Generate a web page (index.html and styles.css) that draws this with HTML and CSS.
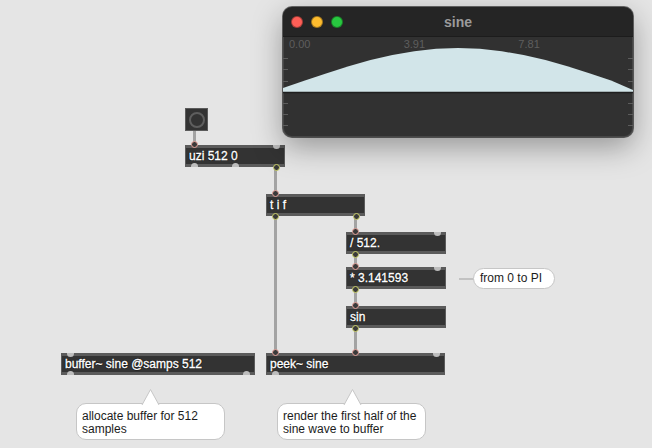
FILE: index.html
```html
<!DOCTYPE html>
<html lang="en">
<head>
  <meta charset="UTF-8">
  <title>sine</title>
  <link rel="stylesheet" href="styles.css">
</head>
<body>
<div class="patcher">
  <svg class="cords" width="652" height="448">
    <g stroke="#a3a3a3" stroke-width="3" fill="none">
      <line x1="194.5" y1="131" x2="194.5" y2="145"/>
      <line x1="275.5" y1="167" x2="275.5" y2="194"/>
      <line x1="275.5" y1="216" x2="275.5" y2="353"/>
      <line x1="355.5" y1="216" x2="355.5" y2="232"/>
      <line x1="355.5" y1="254" x2="355.5" y2="267"/>
      <line x1="355.5" y1="289" x2="355.5" y2="306"/>
      <line x1="355.5" y1="328" x2="355.5" y2="353"/>
    </g>
    <line x1="459" y1="279" x2="474" y2="279" stroke="#c2c2c2" stroke-width="2"/>
  </svg>

  <div class="bang"><span class="bang-ring"></span></div>

  <div class="obj uzi">uzi 512 0
    <span class="port in hot l"></span><span class="port in r"></span>
    <span class="port out l"></span><span class="port out m"></span><span class="port out hot r"></span>
  </div>

  <div class="obj tif">t i f
    <span class="port in hot l"></span>
    <span class="port out hot l"></span><span class="port out hot r"></span>
  </div>

  <div class="obj div">/ 512.
    <span class="port in hot l"></span><span class="port in r"></span>
    <span class="port out hot l"></span>
  </div>

  <div class="obj mul">* 3.141593
    <span class="port in hot l"></span><span class="port in r"></span>
    <span class="port out hot l"></span>
  </div>

  <div class="obj sin">sin
    <span class="port in hot l"></span>
    <span class="port out hot l"></span>
  </div>

  <div class="obj buf">buffer~ sine @samps 512
    <span class="port in l"></span>
    <span class="port out l"></span><span class="port out r"></span>
  </div>

  <div class="obj peek">peek~ sine
    <span class="port in hot l"></span><span class="port in hot m"></span><span class="port in r"></span>
    <span class="port out l"></span>
  </div>

  <div class="note note-buf">
    <svg class="tip" width="19" height="17"><path d="M1,17 L9.5,1.5 L18,17" fill="#fff" stroke="#c6c6c6"/></svg>
    allocate buffer for 512 samples
  </div>

  <div class="note note-peek">
    <svg class="tip" width="19" height="17"><path d="M1,17 L9.5,1.5 L18,17" fill="#fff" stroke="#c6c6c6"/></svg>
    render the first half of the sine wave to buffer
  </div>

  <div class="note note-pi">from 0 to PI</div>

  <div class="win">
    <div class="win-title">
      <div class="lights">
        <span class="light red"></span>
        <span class="light yellow"></span>
        <span class="light green"></span>
      </div>
      <h1>sine</h1>
      <div></div>
    </div>
    <div class="win-body">
      <div class="axis">
        <span>0.00</span>
        <span>3.91</span>
        <span>7.81</span>
      </div>
      <svg class="plot" width="350" height="101">
        <path d="M0,51 L21.9,43.6 L43.8,36.2 L65.6,29.2 L87.5,23.1 L109.4,18 L131.3,14.2 L153.1,11.8 L175,11 L196.9,11.8 L218.8,14.2 L240.6,18 L262.5,23.1 L284.4,29.2 L306.3,36.2 L328.1,43.6 L350,53 L350,55 L0,55 Z" fill="#d2e5e9"/>
        <line x1="0" y1="55.5" x2="350" y2="55.5" stroke="#1f1f1f" stroke-width="1.5"/>
        <g stroke="#5c5c5c" stroke-width="1">
          <line x1="0" y1="21.5" x2="5" y2="21.5"/>
          <line x1="0" y1="32.5" x2="5" y2="32.5"/>
          <line x1="0" y1="44.5" x2="5" y2="44.5"/>
          <line x1="0" y1="66.5" x2="5" y2="66.5"/>
          <line x1="0" y1="77.5" x2="5" y2="77.5"/>
          <line x1="0" y1="88.5" x2="5" y2="88.5"/>
          <line x1="345" y1="21.5" x2="350" y2="21.5"/>
          <line x1="345" y1="32.5" x2="350" y2="32.5"/>
          <line x1="345" y1="44.5" x2="350" y2="44.5"/>
          <line x1="345" y1="66.5" x2="350" y2="66.5"/>
          <line x1="345" y1="77.5" x2="350" y2="77.5"/>
          <line x1="345" y1="88.5" x2="350" y2="88.5"/>
        </g>
      </svg>
    </div>
  </div>
</div>
</body>
</html>
```

FILE: styles.css
```css
body {
  margin: 0;
  background-color: #e5e5e5;
  font-family: "Liberation Sans", Arial, sans-serif;
}

.patcher {
  position: relative;
  width: 652px;
  height: 448px;
  overflow: hidden;
}

.cords {
  position: absolute;
  left: 0;
  top: 0;
}

/* objects */
.obj {
  position: absolute;
  height: 22px;
  box-sizing: border-box;
  background-color: #333;
  border: 1px solid #5b5b5b;
  border-top-width: 3px;
  border-bottom-width: 3px;
  padding-left: 3px;
  color: #fff;
  font-size: 12px;
  line-height: 16px;
  white-space: nowrap;
  -webkit-text-stroke: 0.35px #fff;
  text-shadow: 0 0 1px #000, 0 0 1px #000, 0 0 1px #000;
}

.uzi { left: 185px; top: 145px; width: 100px; }
.tif { left: 266px; top: 194px; width: 99px; }
.div { left: 346px; top: 232px; width: 100px; }
.mul { left: 346px; top: 267px; width: 100px; }
.sin { left: 346px; top: 306px; width: 100px; }
.buf { left: 61px; top: 353px; width: 194px; }
.peek { left: 266px; top: 353px; width: 179px; }

.port {
  position: absolute;
  width: 7px;
  box-sizing: border-box;
  background-color: #bdbdbd;
}
.port.l { left: 4.5px; }
.port.r { right: 4.5px; }
.port.m { left: calc(50% - 3.5px); }

.port.in {
  top: -3px;
  height: 4px;
  border-radius: 0 0 4px 4px;
}
.port.out {
  bottom: -3px;
  height: 4px;
  border-radius: 4px 4px 0 0;
}
.port.in.hot {
  top: -7px;
  height: 7px;
  border-radius: 50%;
  background-color: #3a3a3a;
  border: 1.5px solid #e7a39b;
}
.port.out.hot {
  bottom: -7px;
  height: 7px;
  border-radius: 50%;
  background-color: #3a3a3a;
  border: 1.5px solid #cdd26a;
}

.bang {
  position: absolute;
  left: 185px;
  top: 108px;
  width: 23px;
  height: 23px;
  box-sizing: border-box;
  background-color: #333;
  border: 1px solid #5b5b5b;
  display: flex;
  justify-content: center;
  align-items: center;
}
.bang-ring {
  width: 16px;
  height: 16px;
  box-sizing: border-box;
  border: 2px solid #5e5e5e;
  border-radius: 50%;
}

/* comments */
.note {
  position: absolute;
  box-sizing: border-box;
  background-color: #fff;
  border: 1px solid #c6c6c6;
  border-radius: 10px;
  color: #1c1c1c;
  font-size: 12px;
  line-height: 13px;
  padding: 6px 5px;
}
.note .tip {
  position: absolute;
  top: -16px;
}
.note-buf { left: 76px; top: 403px; width: 149px; height: 37px; }
.note-buf .tip { left: 64px; }
.note-peek { left: 277px; top: 403px; width: 149px; height: 37px; }
.note-peek .tip { left: 65px; }
.note-pi {
  left: 473px;
  top: 268px;
  width: 82px;
  height: 21px;
  border-radius: 11px;
  padding: 3px 6px;
}

/* buffer window */
.win {
  position: absolute;
  left: 283px;
  top: 7px;
  width: 350px;
  height: 130px;
  background-color: #313131;
  border-radius: 9px;
  overflow: hidden;
  box-shadow: 0 0 0 1px rgba(0, 0, 0, 0.55), inset 0 0 0 1px rgba(255, 255, 255, 0.1), 0 10px 30px rgba(0, 0, 0, 0.35);
}

.win-title {
  height: 29px;
  background-color: #252525;
  border-bottom: 1px solid #1c1c1c;
  display: grid;
  grid-template-columns: 1fr auto 1fr;
  align-items: center;
}
.win-title h1 {
  margin: 0;
  font-size: 14px;
  font-weight: bold;
  color: #9b9b9b;
}

.lights {
  display: flex;
  gap: 8px;
  padding-left: 8px;
}
.light {
  width: 12px;
  height: 12px;
  box-sizing: border-box;
  border-radius: 50%;
  border: 0.5px solid rgba(0, 0, 0, 0.35);
}
.red { background-color: #fe5f57; }
.yellow { background-color: #febc2e; }
.green { background-color: #28c840; }

.win-body {
  position: relative;
  height: 100px;
}
.axis {
  display: flex;
  padding-left: 6px;
  font-size: 11px;
  line-height: 14px;
  color: #5e5e5e;
}
.axis span {
  width: 128px;
}
.plot {
  position: absolute;
  left: 0;
  top: 0;
}
```
